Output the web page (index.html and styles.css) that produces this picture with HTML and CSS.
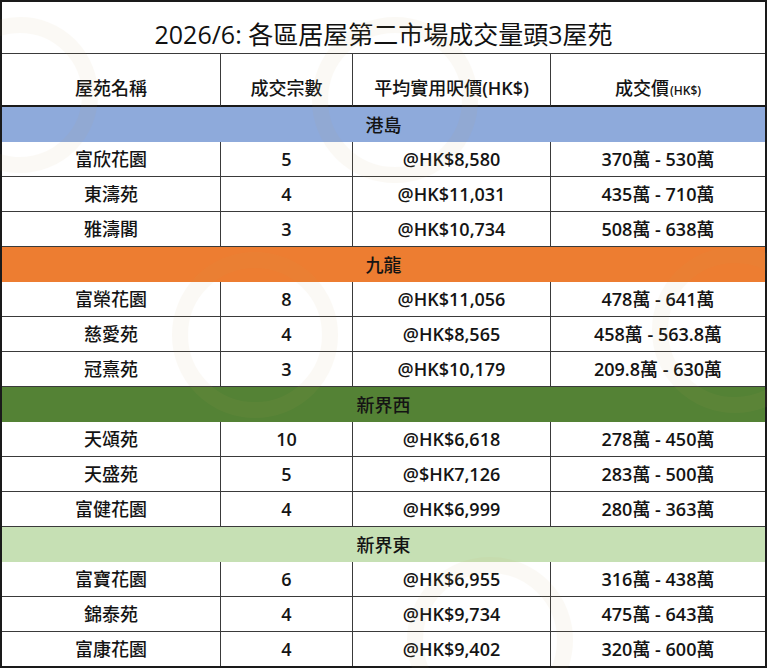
FILE: index.html
```html
<!DOCTYPE html>
<html lang="zh-Hant">
<head>
<meta charset="utf-8">
<title>2026/6 各區居屋第二市場成交量頭3屋苑</title>
<link rel="stylesheet" href="styles.css">
</head>
<body>
<div class="wrap">
<div class="sheet">
  <div class="cell title">2026/6: 各區居屋第二市場成交量頭3屋苑</div>

  <div class="cell head">屋苑名稱</div>
  <div class="cell head">成交宗數</div>
  <div class="cell head">平均實用呎價<span class="lat">(HK$)</span></div>
  <div class="cell head last">成交價<span class="small">(HK$)</span></div>

  <div class="cell band blue">港島</div>
  <div class="cell">富欣花園</div><div class="cell num">5</div><div class="cell num">@HK$8,580</div><div class="cell num last">370<span class="cjk">萬</span>&nbsp;-&nbsp;530<span class="cjk">萬</span></div>
  <div class="cell">東濤苑</div><div class="cell num">4</div><div class="cell num">@HK$11,031</div><div class="cell num last">435<span class="cjk">萬</span>&nbsp;-&nbsp;710<span class="cjk">萬</span></div>
  <div class="cell">雅濤閣</div><div class="cell num">3</div><div class="cell num">@HK$10,734</div><div class="cell num last">508<span class="cjk">萬</span>&nbsp;-&nbsp;638<span class="cjk">萬</span></div>

  <div class="cell band orange">九龍</div>
  <div class="cell">富榮花園</div><div class="cell num">8</div><div class="cell num">@HK$11,056</div><div class="cell num last">478<span class="cjk">萬</span>&nbsp;-&nbsp;641<span class="cjk">萬</span></div>
  <div class="cell">慈愛苑</div><div class="cell num">4</div><div class="cell num">@HK$8,565</div><div class="cell num last">458<span class="cjk">萬</span>&nbsp;-&nbsp;563.8<span class="cjk">萬</span></div>
  <div class="cell">冠熹苑</div><div class="cell num">3</div><div class="cell num">@HK$10,179</div><div class="cell num last">209.8<span class="cjk">萬</span>&nbsp;-&nbsp;630<span class="cjk">萬</span></div>

  <div class="cell band green">新界西</div>
  <div class="cell">天頌苑</div><div class="cell num">10</div><div class="cell num">@HK$6,618</div><div class="cell num last">278<span class="cjk">萬</span>&nbsp;-&nbsp;450<span class="cjk">萬</span></div>
  <div class="cell">天盛苑</div><div class="cell num">5</div><div class="cell num">@$HK7,126</div><div class="cell num last">283<span class="cjk">萬</span>&nbsp;-&nbsp;500<span class="cjk">萬</span></div>
  <div class="cell">富健花園</div><div class="cell num">4</div><div class="cell num">@HK$6,999</div><div class="cell num last">280<span class="cjk">萬</span>&nbsp;-&nbsp;363<span class="cjk">萬</span></div>

  <div class="cell band lightgreen">新界東</div>
  <div class="cell">富寶花園</div><div class="cell num">6</div><div class="cell num">@HK$6,955</div><div class="cell num last">316<span class="cjk">萬</span>&nbsp;-&nbsp;438<span class="cjk">萬</span></div>
  <div class="cell">錦泰苑</div><div class="cell num">4</div><div class="cell num">@HK$9,734</div><div class="cell num last">475<span class="cjk">萬</span>&nbsp;-&nbsp;643<span class="cjk">萬</span></div>
  <div class="cell bottom">富康花園</div><div class="cell num bottom">4</div><div class="cell num bottom">@HK$9,402</div><div class="cell num bottom last">320<span class="cjk">萬</span>&nbsp;-&nbsp;600<span class="cjk">萬</span></div>
</div>
<svg class="watermark" width="768" height="668" viewBox="0 0 768 668" aria-hidden="true">
  <g fill="none" stroke="#c9a860" stroke-width="16">
    <circle cx="20" cy="95" r="70"/>
    <circle cx="395" cy="100" r="75"/>
    <circle cx="255" cy="335" r="75"/>
    <circle cx="735" cy="330" r="75"/>
    <circle cx="490" cy="640" r="75"/>
  </g>
</svg>
</div>
</body>
</html>
```

FILE: styles.css
```css
* { box-sizing: border-box; }

html, body {
  margin: 0;
  padding: 0;
  background: #ffffff;
}

.wrap {
  position: relative;
  width: 768px;
  height: 668px;
}

.sheet {
  width: 767px;
  border: 2px solid #1a1a1a;
  display: grid;
  grid-template-columns: 219px 132px 198px 214px;
  grid-template-rows: 52px 53px repeat(15, 35px) 34px;
  font-family: "Open Sans", "Noto Sans CJK TC", sans-serif;
  font-size: 18px;
  font-weight: 500;
  color: #141414;
  background: #ffffff;
}

.cell {
  display: flex;
  align-items: center;
  justify-content: center;
  border-right: 1px solid #3a3a3a;
  border-bottom: 1px solid #3a3a3a;
  white-space: nowrap;
  line-height: 1;
}

.cell.num { font-weight: 600; }
.lat { font-weight: 600; }
.cjk { font-weight: 500; }

.cell.last { border-right: none; }
.cell.bottom { border-bottom: none; }

.title {
  grid-column: 1 / -1;
  border-right: none;
  align-items: flex-end;
  padding-bottom: 6px;
  font-size: 25px;
  font-weight: 400;
  color: #111;
}

.head {
  align-items: flex-end;
  padding-bottom: 8px;
  border-bottom: 2px solid #1a1a1a;
}

.small {
  font-size: 12px;
  font-weight: 600;
  margin-left: 1px;
}

.band {
  grid-column: 1 / -1;
  border-right: none;
  border-bottom: none;
}

.blue { background: #8eaadb; }
.orange { background: #ed7d31; }
.green { background: #548235; }
.lightgreen { background: #c6e0b4; }

.watermark {
  position: absolute;
  left: 0;
  top: 0;
  pointer-events: none;
  opacity: 0.06;
}
```
